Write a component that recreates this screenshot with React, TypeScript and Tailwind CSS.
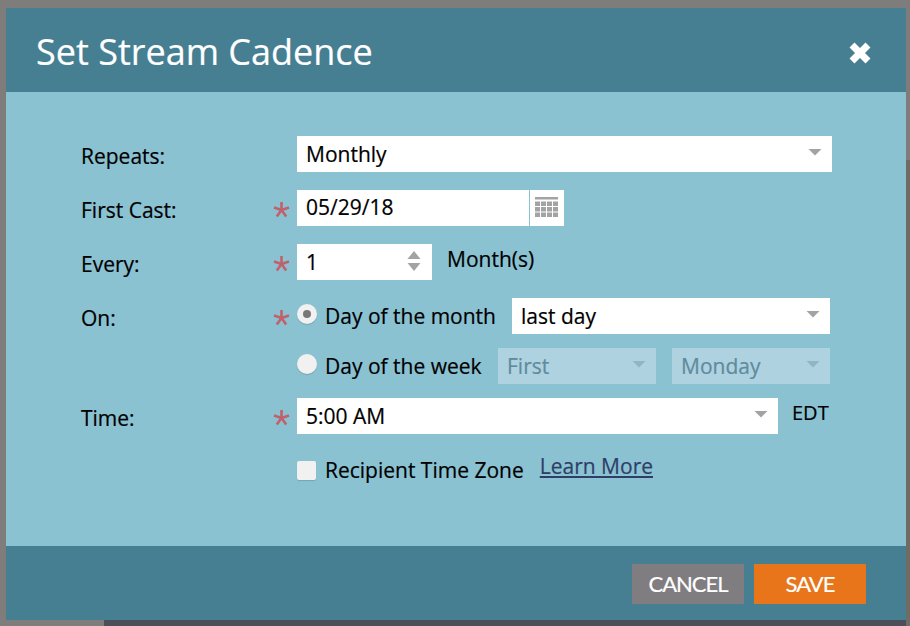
import React from "react";

const Star = () => (
  <span className="absolute left-[-26px] top-[5px] w-[20px] h-[28px] flex items-center justify-center">
    <svg width="17" height="17" viewBox="0 0 17 17">
      <g stroke="#c0616b" strokeWidth="2.6" strokeLinecap="butt" fill="none">
        <path d="M8.5 9V1" />
        <path d="M8.5 9L1 6.5" />
        <path d="M8.5 9L16 6.5" />
        <path d="M8.5 9L3.8 15.5" />
        <path d="M8.5 9L13.2 15.5" />
      </g>
    </svg>
  </span>
);

const Caret = ({ color = "#a3a3a3" }: { color?: string }) => (
  <svg width="14" height="8" viewBox="0 0 14 8" className="shrink-0">
    <path d="M0.5 1H13.5L7 7.5Z" fill={color} />
  </svg>
);

function Select({ value, w, disabled }: { value: string; w: string; disabled?: boolean }) {
  return (
    <div
      className={`${w} h-9 flex items-center justify-between pl-[9px] pr-[10px] shrink-0 ${
        disabled ? "bg-[#aed2e0] text-[#5f8b9d]" : "bg-white text-black"
      }`}
    >
      <span className="pt-[1px]">{value}</span>
      <span className="pb-[4px] flex">
        <Caret color={disabled ? "#8fb6c6" : "#a3a3a3"} />
      </span>
    </div>
  );
}

function Label({ children }: { children: React.ReactNode }) {
  return <div className="w-[216px] shrink-0 h-9 flex items-center pt-[6px] text-black">{children}</div>;
}

export default function App() {
  return (
    <div className="w-[910px] h-[626px] bg-[#7f7d7c] pt-2 pl-[6px] relative overflow-hidden font-['Open_Sans',sans-serif] text-[21px] text-black [-webkit-text-stroke:0.2px]">
      <div className="absolute left-[104px] right-0 bottom-0 h-[6px] bg-[#4c4f58]" />
      <div className="absolute right-0 top-[160px] bottom-0 w-[4px] bg-[#6f6c66]" />
      <div className="relative w-[900px] h-[612px] flex flex-col">
        <header className="h-[84px] bg-[#467e92] flex items-center justify-between pl-[30px] pr-[34px] shrink-0">
          <h1 className="text-[36px] text-white leading-none pt-[3px]">Set Stream Cadence</h1>
          <svg width="24" height="24" viewBox="0 0 24 24" className="mt-[5px]">
            <path d="M4 4L20 20M20 4L4 20" stroke="#fff" strokeWidth="7" />
          </svg>
        </header>

        <main className="flex-1 bg-[#8ac2d2] pl-[75px] pt-[44px] flex flex-col">
          <div className="flex">
            <Label>Repeats:</Label>
            <Select value="Monthly" w="w-[535px]" />
          </div>

          <div className="flex mt-[18px]">
            <Label>First Cast:</Label>
            <div className="relative flex">
              <Star />
              <div className="w-[232px] h-9 bg-white flex items-center pl-[9px]">05/29/18</div>
              <div className="w-[34px] h-9 bg-white ml-[1px] flex items-center justify-center">
                <svg width="24" height="22" viewBox="0 0 24 22" fill="#a3a3a3">
                  <rect x="0" y="0" width="23" height="2.5" />
                  {[4.5, 10, 15.5].map((y) =>
                    [0, 6, 12, 18].map((x) => <rect key={`${x}-${y}`} x={x} y={y} width="5" height="4.5" />)
                  )}
                </svg>
              </div>
            </div>
          </div>

          <div className="flex mt-[18px]">
            <Label>Every:</Label>
            <div className="relative flex">
              <Star />
              <div className="w-[135px] h-9 bg-white flex items-center justify-between pl-[9px] pr-[11px]">
                <span className="pt-[1px]">1</span>
                <svg width="14" height="22" viewBox="0 0 14 22" fill="#a3a3a3" className="mb-[3px]">
                  <path d="M7 1L13.5 9H0.5Z" />
                  <path d="M7 21L13.5 13H0.5Z" />
                </svg>
              </div>
              <span className="ml-[15px] leading-[30px]">Month(s)</span>
            </div>
          </div>

          <div className="flex mt-[18px]">
            <Label>On:</Label>
            <div className="relative flex items-center">
              <Star />
              <span className="w-[20px] h-[20px] rounded-full bg-[#f1f1f1] flex items-center justify-center shrink-0 mb-[4px] shadow-[0_1px_1px_rgba(0,0,0,0.15)]">
                <span className="w-[8px] h-[8px] rounded-full bg-[#777]" />
              </span>
              <span className="ml-[8px] w-[187px] pt-[2px]">Day of the month</span>
              <Select value="last day" w="w-[318px]" />
            </div>
          </div>

          <div className="flex mt-[14px]">
            <Label>{""}</Label>
            <div className="flex items-center">
              <span className="w-[20px] h-[20px] rounded-full bg-[#f1f1f1] shrink-0 mb-[4px] shadow-[0_1px_1px_rgba(0,0,0,0.15)]" />
              <span className="ml-[8px] w-[173px] pt-[2px]">Day of the week</span>
              <Select value="First" w="w-[158px]" disabled />
              <div className="w-[16px]" />
              <Select value="Monday" w="w-[158px]" disabled />
            </div>
          </div>

          <div className="flex mt-[14px]">
            <Label>Time:</Label>
            <div className="relative flex">
              <Star />
              <Select value="5:00 AM" w="w-[481px]" />
              <span className="ml-[14px] text-[20px] leading-[30px]">EDT</span>
            </div>
          </div>

          <div className="flex mt-[17px]">
            <div className="w-[216px] shrink-0" />
            <div className="flex items-center">
              <span className="w-[19px] h-[19px] rounded-[2px] bg-[#f1f1f1] shrink-0 shadow-[0_1px_1px_rgba(0,0,0,0.15)]" />
              <span className="ml-[9px]">Recipient Time Zone</span>
              <a className="ml-[16px] text-[#2f3e68] underline mb-[8px]">Learn More</a>
            </div>
          </div>
        </main>

        <footer className="h-[74px] bg-[#467e92] flex items-start justify-end gap-[10px] pr-[40px] pt-[18px] shrink-0 font-['Lato',sans-serif] text-[22px] tracking-[-1px] text-white">
          <button className="w-[112px] h-10 bg-[#7f7d80] pb-[2px]">CANCEL</button>
          <button className="w-[112px] h-10 bg-[#e8751a] pb-[2px]">SAVE</button>
        </footer>
      </div>
    </div>
  );
}
